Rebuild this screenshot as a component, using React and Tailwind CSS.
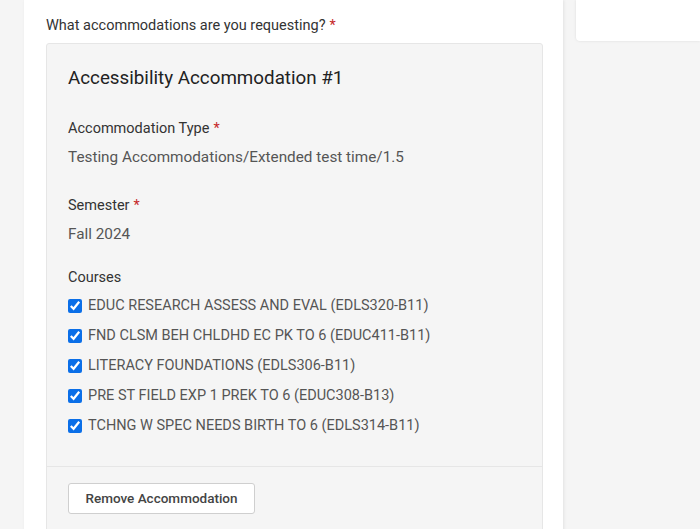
import React from 'react';

const courses = [
  'EDUC RESEARCH ASSESS AND EVAL (EDLS320-B11)',
  'FND CLSM BEH CHLDHD EC PK TO 6 (EDUC411-B11)',
  'LITERACY FOUNDATIONS (EDLS306-B11)',
  'PRE ST FIELD EXP 1 PREK TO 6 (EDUC308-B13)',
  'TCHNG W SPEC NEEDS BIRTH TO 6 (EDLS314-B11)',
];

const Req = () => <span className="text-[#c62828] ml-1">*</span>;

const App = () => {
  return (
    <div className="min-h-screen bg-[#f5f5f5] flex items-start gap-[13px] pl-[24px] font-['Roboto',sans-serif] text-[14.5px] overflow-hidden">
      <div className="w-[539px] shrink-0 min-h-[529px] bg-white shadow-[1px_0_3px_rgba(0,0,0,0.08)] pl-[22px] pr-[20px] pt-[16px]">
        <div className="text-[#333] leading-[20px] mb-[7px]">
          What accommodations are you requesting?<Req />
        </div>
        <div className="bg-[#f5f5f5] border border-[#e6e6e6] rounded-[3px]">
          <div className="pl-[21px] pr-4 pt-[20px] pb-[25px]">
            <h3 className="text-[18.8px] leading-[28px] text-[#222]">Accessibility Accommodation #1</h3>

            <div className="mt-[27px] text-[#333] leading-[20px]">
              Accommodation Type<Req />
            </div>
            <div className="mt-[8px] text-[#555] text-[15.3px] leading-[20px]">
              Testing Accommodations/Extended test time/1.5
            </div>

            <div className="mt-[29px] text-[#333] leading-[20px]">
              Semester<Req />
            </div>
            <div className="mt-[8px] text-[#555] text-[15.3px] leading-[20px]">Fall 2024</div>

            <div className="mt-[24px] text-[#333] leading-[20px]">Courses</div>
            <div className="mt-[3px]">
              {courses.map((c) => (
                <label key={c} className="flex items-center h-[30px] text-[#555]">
                  <input
                    type="checkbox"
                    defaultChecked
                    className="w-[14px] h-[14px] m-0 mr-[6px] accent-[#0b6fe8]"
                  />
                  {c}
                </label>
              ))}
            </div>
          </div>
          <div className="border-t border-[#e6e6e6] pl-[21px] pt-[16px] pb-[20px]">
            <button className="h-[31px] w-[187px] bg-white border border-[#cfcfcf] rounded-[3px] text-[#444] text-[13.5px] font-medium">
              Remove Accommodation
            </button>
          </div>
        </div>
      </div>
      <div className="flex-1 h-[41px] bg-white rounded-bl-[4px] shadow-[0_0_3px_rgba(0,0,0,0.1)]" />
    </div>
  );
};

export default App;
